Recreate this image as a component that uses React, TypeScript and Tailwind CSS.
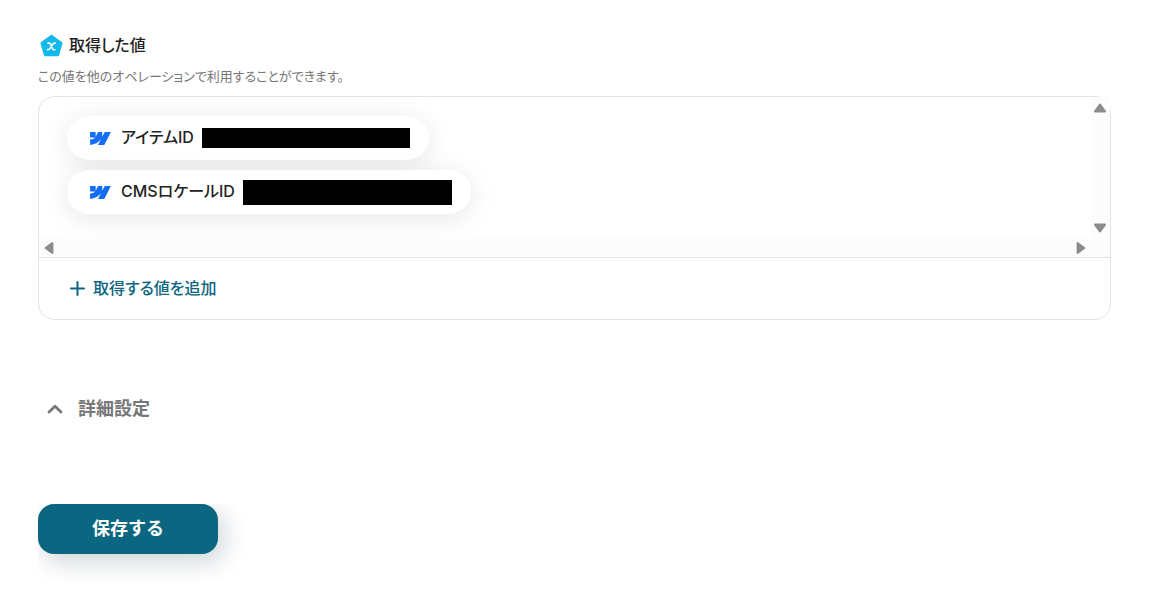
import type { ReactNode } from 'react';

function WebflowLogo() {
  return (
    <svg viewBox="0 4.515 24 14.97" className="h-[13px] w-[21px] shrink-0" fill="#146ef5" aria-hidden="true">
      <path d="m24 4.515-7.658 14.97H9.149l3.205-6.204h-.144C9.566 16.713 5.621 18.973 0 19.485v-6.118s3.596-.213 5.71-2.435H0V4.515h6.417v5.278l.144-.001 2.622-5.277h4.854v5.244h.144l2.72-5.244H24Z" />
    </svg>
  );
}

function ValueIcon() {
  return (
    <svg viewBox="0 0 24 24" className="size-6 shrink-0" aria-hidden="true">
      <path
        d="M12.5 2.6 21.8 9.4 18.6 20.5H6.4L3.2 9.4Z"
        fill="#12b9ea"
        stroke="#12b9ea"
        strokeWidth="3.4"
        strokeLinejoin="round"
      />
      <path
        d="M8.9 9.1h1.3c.6 0 .9.3 1.2.9l2.2 4.9c.3.6.6.8 1.1.8h1.2M16.2 9.1c-1.1-.1-1.6.1-2.3 1l-3.1 4.5c-.6.9-1.2 1.1-2.2 1"
        fill="none"
        stroke="#fff"
        strokeWidth="1.6"
        strokeLinecap="round"
      />
    </svg>
  );
}

function Arrow({ className }: { className: string }) {
  return (
    <svg viewBox="0 0 14 10" className={className} fill="#8b8b8b" stroke="#8b8b8b" aria-hidden="true">
      <path d="M7 1.6 12 8.4H2Z" strokeWidth="2" strokeLinejoin="round" />
    </svg>
  );
}

function Chip({ label, children }: { label: string; children: ReactNode }) {
  return (
    <li className="flex h-11 w-fit items-center rounded-full bg-white pr-[19px] pl-[23px] shadow-[0_4px_28px_rgba(0,0,0,0.1)]">
      <WebflowLogo />
      <span className="mr-2 ml-[10px] pb-[2px] text-base font-medium whitespace-nowrap">{label}</span>
      {children}
    </li>
  );
}

export default function App() {
  return (
    <main className="pt-[34px] pr-[41px] pl-[38px] font-['Inter','Noto_Sans_CJK_JP',sans-serif] text-[#222] [font-feature-settings:'palt']">
      <section>
        <h2 className="flex h-6 items-center gap-[6px] pl-px text-base font-medium">
          <ValueIcon />
          <span className="pb-[2px]">取得した値</span>
        </h2>
        <p className="mt-2 text-[13px] leading-5 text-[#777]">この値を他のオペレーションで利用することができます。</p>
        <div className="mt-[10px] rounded-2xl border border-[#e3e3e3]">
          <div className="grid grid-cols-[1fr_19px] grid-rows-[141px_19px] border-b border-[#e3e3e3]">
            <ul className="flex flex-col gap-[10px] overflow-hidden rounded-tl-2xl pt-[19px] pl-7">
              <Chip label="アイテムID">
                <span className="h-5 w-52 bg-black" />
              </Chip>
              <Chip label="CMSロケールID">
                <span className="h-[25px] w-[209px] bg-black" />
              </Chip>
            </ul>
            <div className="flex flex-col items-start justify-between bg-[#fcfcfc] pt-[6px] pb-[5px] pl-[2px]">
              <Arrow className="h-[10px] w-[14px]" />
              <Arrow className="h-[10px] w-[14px] rotate-180" />
            </div>
            <div className="flex items-center justify-between bg-[#fcfcfc] px-[3px]">
              <Arrow className="h-[10px] w-[14px] -rotate-90" />
              <Arrow className="h-[10px] w-[14px] rotate-90" />
            </div>
            <div className="bg-[#fcfcfc]" />
          </div>
          <div className="flex h-[61px] items-center pl-[31px]">
            <button type="button" className="flex items-center gap-2 text-base font-medium text-[#0b6681]">
              <svg viewBox="0 0 15 15" className="size-[15px]" fill="none" stroke="currentColor" strokeWidth="2" strokeLinecap="round" aria-hidden="true">
                <path d="M7.5 1v13M1 7.5h13" />
              </svg>
              <span className="pb-[2px]">取得する値を追加</span>
            </button>
          </div>
        </div>
      </section>

      <button type="button" className="mt-[75px] ml-[9px] flex h-7 items-center gap-[15px] text-lg font-bold text-[#777] [font-feature-settings:normal]">
        <svg viewBox="0 0 16 10" className="h-[10px] w-4" fill="none" stroke="currentColor" strokeWidth="2.8" strokeLinecap="round" strokeLinejoin="round" aria-hidden="true">
          <path d="M2 8 8 2.2 14 8" />
        </svg>
        詳細設定
      </button>

      <div className="mt-[81px] overflow-hidden pb-7">
        <button type="button" className="block h-[50px] w-[180px] rounded-2xl bg-[#0b6681] text-lg font-bold text-white shadow-[6px_8px_24px_rgba(20,40,60,0.2)] [font-feature-settings:normal]">
          保存する
        </button>
      </div>
    </main>
  );
}
